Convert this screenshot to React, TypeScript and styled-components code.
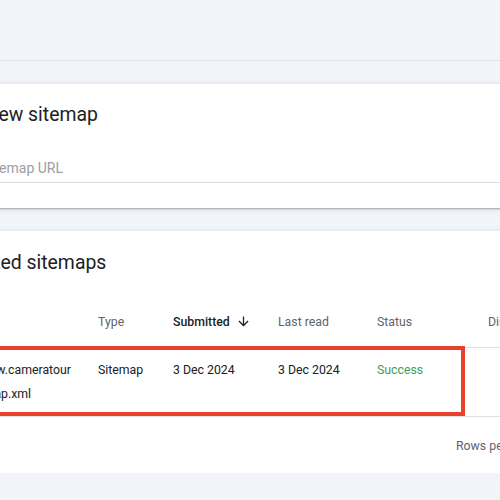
import styled, { createGlobalStyle } from 'styled-components';

const GlobalStyle = createGlobalStyle`
  html, body {
    margin: 0;
    padding: 0;
    background: #f1f4f9;
    overflow: hidden;
  }
  body {
    font-family: Roboto, "Liberation Sans", Arial, sans-serif;
    color: #202124;
  }
`;

const Page = styled.div`
  margin-left: -92px;
  width: 820px;
`;

const TopBar = styled.div`
  height: 60px;
  border-bottom: 1px solid #dfe3ea;
`;

const Main = styled.main`
  display: flex;
  flex-direction: column;
  gap: 23px;
  padding-top: 23px;
`;

const Card = styled.section<{ $pb?: number }>`
  background: #fff;
  box-shadow: 0 1px 1.5px rgba(60, 64, 67, 0.38), 0 1px 4px 1px rgba(60, 64, 67, 0.1);
  padding-bottom: ${(p) => p.$pb ?? 0}px;
`;

const CardTitle = styled.h2<{ $pt: number }>`
  margin: 0;
  padding: ${(p) => p.$pt}px 24px 0 25px;
  font-size: 19.4px;
  font-weight: 400;
  line-height: 28px;
  color: #202124;
`;

const Field = styled.div`
  margin: 25px 24px 0;
  height: 28px;
  border-bottom: 1px solid #dadce0;
  display: flex;
  align-items: center;
  padding-left: 16px;
  font-size: 14px;
  color: #9aa0a6;
`;

const Table = styled.div`
  margin-top: 19px;
`;

const cols = '190px 75px 105px 99px 111px 1fr';

const HeadRow = styled.div`
  display: grid;
  grid-template-columns: ${cols};
  height: 51px;
  align-items: center;
  border-bottom: 1px solid #e0e0e0;
  font-size: 12.3px;
  color: #5f6368;
`;

const HeadCell = styled.div<{ $active?: boolean }>`
  display: flex;
  align-items: center;
  gap: 6px;
  font-weight: ${(p) => (p.$active ? 500 : 400)};
  color: ${(p) => (p.$active ? '#202124' : '#5f6368')};
  white-space: nowrap;
`;

const HeadFirst = styled.div`
  padding-left: 30px;
`;

const BodyRow = styled.div`
  position: relative;
  display: grid;
  grid-template-columns: ${cols};
  padding: 10px 0;
  border-bottom: 1px solid #e0e0e0;
  font-size: 12.3px;
  line-height: 24px;
`;

const Cell = styled.div<{ $success?: boolean }>`
  color: ${(p) => (p.$success ? '#3a9d5d' : '#202124')};
  white-space: nowrap;
`;

const FirstCell = styled(Cell)`
  padding-left: 30px;
`;

const CountCell = styled(Cell)`
  text-align: right;
  padding-right: 40px;
`;

const Highlight = styled.div`
  position: absolute;
  left: 0;
  top: -2px;
  width: 557px;
  bottom: 0;
  border: 4px solid #e8412c;
  box-sizing: border-box;
  pointer-events: none;
`;

const Footer = styled.div`
  display: flex;
  align-items: center;
  padding: 17px 0 15px 548px;
  font-size: 12.3px;
  line-height: 24px;
  color: #5f6368;
  gap: 24px;
`;

const ArrowDown = () => (
  <svg width="15" height="15" viewBox="0 0 24 24" fill="#202124">
    <path d="M20 12l-1.41-1.41L13 16.17V4h-2v12.17l-5.58-5.59L4 12l8 8 8-8z" />
  </svg>
);

export default function App() {
  return (
    <>
      <GlobalStyle />
      <Page>
        <TopBar />
        <Main>
          <Card $pb={25}>
            <CardTitle $pt={17}>Add a new sitemap</CardTitle>
            <Field>Enter sitemap URL</Field>
          </Card>
          <Card>
            <CardTitle $pt={18}>Submitted sitemaps</CardTitle>
            <Table>
              <HeadRow>
                <HeadFirst>Sitemap</HeadFirst>
                <HeadCell>Type</HeadCell>
                <HeadCell $active>
                  Submitted <ArrowDown />
                </HeadCell>
                <HeadCell>Last read</HeadCell>
                <HeadCell>Status</HeadCell>
                <HeadCell>Discovered pages</HeadCell>
              </HeadRow>
              <BodyRow>
                <FirstCell>
                  https://www.cameratour
                  <br />
                  s.ro/sitemap.xml
                </FirstCell>
                <Cell>Sitemap</Cell>
                <Cell>3 Dec 2024</Cell>
                <Cell>3 Dec 2024</Cell>
                <Cell $success>Success</Cell>
                <CountCell>12</CountCell>
                <Highlight />
              </BodyRow>
              <Footer>
                <span>Rows per page:</span>
                <span>10</span>
                <span>1-1 of 1</span>
              </Footer>
            </Table>
          </Card>
        </Main>
      </Page>
    </>
  );
}
